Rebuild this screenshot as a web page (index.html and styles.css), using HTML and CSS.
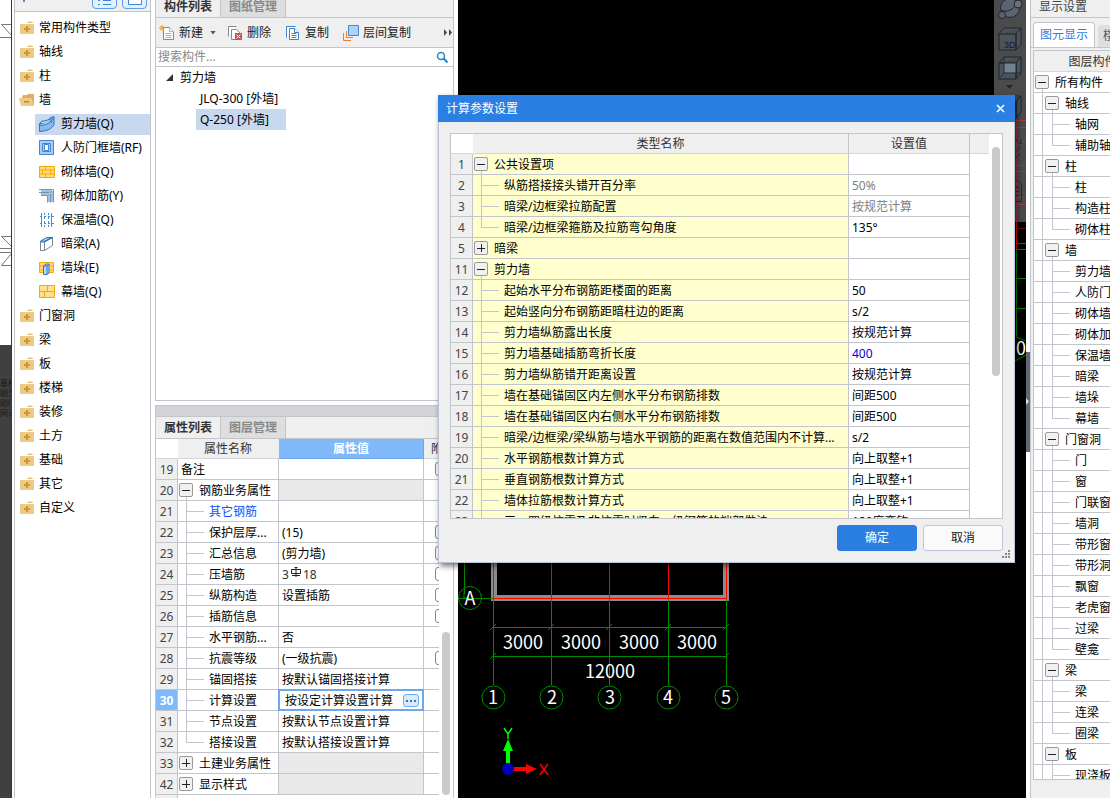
FILE: index.html
```html
<!DOCTYPE html>
<html lang="zh-CN">
<head>
<meta charset="utf-8">
<title>计算参数设置</title>
<link rel="stylesheet" href="styles.css">
</head>
<body>
<svg class="defs" width="0" height="0" aria-hidden="true">
  <symbol id="folder" viewBox="0 0 16 16"><path d="M8 3 9 1.500h4L14.500 3z" fill="#e9c684"/><path d="M1 4h14v10H1z" fill="#efca85"/><path d="M7 6h2v2h2v2H9v2H7v-2H5V8h2z" fill="#c99a3d"/></symbol>
  <symbol id="folder-open" viewBox="0 0 16 16"><path d="M3 5 4 3h4l1-1h6v11h-1l-2-7H3z" fill="#dcb068"/><path d="M0 6h12l3 8H2z" fill="#f0ca84"/><path d="M5 9h5v1.500H5z" fill="#c08a2c"/></symbol>
  <symbol id="cube" viewBox="0 0 24 24"><path d="M1 7h17v16H1zM1 7l5-6h17v16l-5 6V7l5-6" fill="#4b535c" stroke="#1f2730"/></symbol>
</svg>
<div class="app">
  <div class="backdrop" aria-hidden="true">
    <svg class="marks" width="12" height="345" fill="none" stroke="#777"><path d="M11 24.500H1.500l10 11M0 37.500h11M11 236.500H1.500l10 10M0 248.500h11M0 252.500h11M11 254 1.500 265.500H11"/></svg>
    <div class="ghost"><span>基柏</span><span>刚至</span><span>刚(b</span><span>网评</span></div>
  </div>

  <nav class="types">
    <div class="types-bar"><i class="tick"></i>
      <button aria-label="列表"><svg width="14" height="14" stroke="#3f86d8" fill="none"><path d="M0 6.500h2M5 6.500h8M0 10.500h2M5 10.500h8"/></svg></button>
      <button aria-label="视图"><svg width="14" height="14" stroke="#3f86d8" fill="#fff"><path d="M.5 1.500h13v9H.5z"/></svg></button>
    </div>
    <ul>
      <li><svg><use href="#folder"/></svg>常用构件类型</li>
      <li><svg><use href="#folder"/></svg>轴线</li>
      <li><svg><use href="#folder"/></svg>柱</li>
      <li><svg><use href="#folder-open"/></svg>墙</li>
      <li class="sub on"><span><svg fill="#8ab9ee" stroke="#2f74bd"><path d="M.5 7.500C6 8 10 6 12 1.500l3-1v8C13 13 8 15 .5 15.500z"/><path d="M.5 7.500 3 5c4 0 7-1 9-3.500M12 1.500V7M.5 9.500C8 9.500 12 6 15 1.500" fill="#aacdf5"/></svg>剪力墙(Q)</span></li>
      <li class="sub"><span><svg fill="#a9cdf6" stroke="#4584cf"><path d="M.5.500h14v14H.5z"/><path d="M3.500 3.500h8v8h-8z"/><path d="M5.500 4.500h4v6h-4z" fill="#fff"/></svg>人防门框墙(RF)</span></li>
      <li class="sub"><span><svg fill="#ffd978" stroke="#f5a90c"><path d="M.5 2.500h15v11H.5zM0 6h16M0 10h16M6.500 2.500V6M3.500 6v4M11.500 6v4M6.500 10v3.500"/></svg>砌体墙(Q)</span></li>
      <li class="sub"><span><svg fill="none" stroke="#7f93aa"><path d="M0 1.500h14.500v13M0 4.500h11.500v10M2 7.500h6.500v7"/><path d="M2 3h11v11M2 6h8v8" stroke="#3e80d0"/></svg>砌体加筋(Y)</span></li>
      <li class="sub"><span><svg fill="none" stroke="#438adb"><path d="M2.500 1v14M12.500 1v14"/><path d="M5.500 1v14M9.500 1v14M1 4.500h14M1 11.500h14" stroke-dasharray="2 2"/></svg>保温墙(Q)</span></li>
      <li class="sub"><span><svg fill="#fff" stroke="#73869b"><path d="M1.500 5.500h4v9h-4zM5.500 5.500l8-4v8l-8 5z"/><path d="M1.500 5 8 1.500h6L5.500 6h-4zM3 5h3l6-3.500" fill="#a5cdf8" stroke="#2f76c7"/></svg>暗梁(A)</span></li>
      <li class="sub"><span><svg fill="#ffd978" stroke="#f5a90c"><path d="M.5 2.500h14v10H.5zM0 6h15M0 10h15"/><path d="M4.500 6 7 4h3v9l-2 1.500H4.500zM8 6v8M4.500 6H8l2-2" fill="#b7d9ff" stroke="#2f76c7"/></svg>墙垛(E)</span></li>
      <li class="sub"><span><svg fill="#ffe08c" stroke="#f5a90c"><path d="M.5 1.500h15v12H.5zM0 7.500h16M8.500 1.500v6M5.500 7.500v6"/></svg>幕墙(Q)</span></li>
      <li><svg><use href="#folder"/></svg>门窗洞</li>
      <li><svg><use href="#folder"/></svg>梁</li>
      <li><svg><use href="#folder"/></svg>板</li>
      <li><svg><use href="#folder"/></svg>楼梯</li>
      <li><svg><use href="#folder"/></svg>装修</li>
      <li><svg><use href="#folder"/></svg>土方</li>
      <li><svg><use href="#folder"/></svg>基础</li>
      <li><svg><use href="#folder"/></svg>其它</li>
      <li><svg><use href="#folder"/></svg>自定义</li>
    </ul>
  </nav>

  <div class="middle">
    <section class="components">
      <div class="tabs clipped"><button class="on">构件列表</button><button>图纸管理</button></div>
      <div class="tools">
        <button class="new"><svg fill="#fff" stroke="#7b8996"><path d="M4.500 2.500h6l4 4v8h-10z"/><path d="M10.500 2.500v4h4M6.500 8.500h6M6.500 10.500h6M6.500 12.500h6" stroke="#aab2ba"/><path d="M1 1l4 4M5 1 1 5M3 0v6M0 3h6" stroke="#eda526"/></svg>新建<i class="caret"></i></button>
        <button class="del"><svg fill="#fff" stroke="#7b8996"><path d="M1.500 11.500v-10h8M4.500 14.500v-10h5l4 4v6z"/><path d="M8 8h7v7H8z" fill="#d84848" stroke="none"/><path d="m9.500 9.500 4 4m0-4-4 4" stroke="#fff"/></svg>删除</button>
        <button class="copy"><svg fill="#fff" stroke="#3f82c9"><path d="M1.500 12.500v-11h9M4.500 14.500v-11h5l4 4v7z"/><path d="M9.500 3.500v4h4M6.500 8.500h5M6.500 10.500h5M6.500 12.500h5"/></svg>复制</button>
        <button class="layer"><svg fill="none" stroke="#ee7d2c"><path d="M.5 8v7.500H8M3.500 6v6.500H10"/><path d="M5.500.500h10v10h-10z" fill="#acd3ff" stroke="#488ac8"/></svg>层间复制</button>
        <button class="more" aria-label="更多"><svg width="10" height="8"><path d="m1 0 3 3.500L1 7zm5 0 3 3.500L6 7z" fill="#444"/></svg></button>
      </div>
      <label class="search"><input type="text" placeholder="搜索构件..." aria-label="搜索构件"><svg width="12" height="12" fill="none" stroke="#2583c5" stroke-width="1.500"><circle cx="5" cy="5" r="3.500"/><path d="m7.500 7.500 4 4" stroke-width="2"/></svg></label>
      <ul class="list">
        <li><svg width="7" height="7"><path d="M7 0v7H0z" fill="#333"/></svg>剪力墙</li>
        <li class="leaf"><span>JLQ-300 [外墙]</span></li>
        <li class="leaf on"><span>Q-250 [外墙]</span></li>
      </ul>
    </section>
    <section class="props">
      <div class="strip"></div>
      <div class="tabs"><button class="on">属性列表</button><button>图层管理</button></div>
      <div class="props-body">
        <div class="props-view">
          <table class="grid">
            <colgroup><col class="c-num"><col class="c-prop"><col class="c-pval"><col class="c-extra"></colgroup>
            <thead><tr><th></th><th>属性名称</th><th class="hot">属性值</th><th class="extra">附加</th></tr></thead>
            <tbody>
              <tr><th>19</th><td>备注</td><td></td><td class="ck"><input type="checkbox" aria-label="备注"></td></tr>
              <tr><th>20</th><td><div class="n"><button class="box open" aria-label="折叠"></button>钢筋业务属性</div></td><td class="off"></td><td></td></tr>
              <tr><th>21</th><td><div class="n"><i class="branch"></i><a href="#">其它钢筋</a></div></td><td></td><td></td></tr>
              <tr><th>22</th><td><div class="n"><i class="branch"></i>保护层厚...</div></td><td>(15)</td><td class="ck"><input type="checkbox" aria-label="保护层厚度"></td></tr>
              <tr><th>23</th><td><div class="n"><i class="branch"></i>汇总信息</div></td><td>(剪力墙)</td><td class="ck"><input type="checkbox" aria-label="汇总信息"></td></tr>
              <tr><th>24</th><td><div class="n"><i class="branch"></i>压墙筋</div></td><td><div class="bar">3<svg width="10" height="14" fill="none" stroke="#222"><path d="M5 1v10M1 9.500h8M.5 3.500h9v4H.5zM3.500 1.500h3"/></svg>18</div></td><td class="ck"><input type="checkbox" aria-label="压墙筋"></td></tr>
              <tr><th>25</th><td><div class="n"><i class="branch"></i>纵筋构造</div></td><td>设置插筋</td><td class="ck"><input type="checkbox" aria-label="纵筋构造"></td></tr>
              <tr><th>26</th><td><div class="n"><i class="branch"></i>插筋信息</div></td><td></td><td class="ck"><input type="checkbox" aria-label="插筋信息"></td></tr>
              <tr><th>27</th><td><div class="n"><i class="branch"></i>水平钢筋...</div></td><td>否</td><td></td></tr>
              <tr><th>28</th><td><div class="n"><i class="branch"></i>抗震等级</div></td><td>(一级抗震)</td><td class="ck"><input type="checkbox" aria-label="抗震等级"></td></tr>
              <tr><th>29</th><td><div class="n"><i class="branch"></i>锚固搭接</div></td><td>按默认锚固搭接计算</td><td></td></tr>
              <tr><th class="cur">30</th><td><div class="n"><i class="branch"></i>计算设置</div></td><td class="edit"><div><input type="text" value="按设定计算设置计算" aria-label="计算设置"><button aria-label="选择"><i></i><i></i><i></i></button></div></td><td></td></tr>
              <tr><th>31</th><td><div class="n"><i class="branch"></i>节点设置</div></td><td>按默认节点设置计算</td><td></td></tr>
              <tr><th>32</th><td><div class="n"><i class="branch last"></i>搭接设置</div></td><td>按默认搭接设置计算</td><td></td></tr>
              <tr><th>33</th><td><div class="n"><button class="box plus" aria-label="展开"></button>土建业务属性</div></td><td class="off"></td><td></td></tr>
              <tr><th>42</th><td><div class="n"><button class="box plus" aria-label="展开"></button>显示样式</div></td><td class="off"></td><td></td></tr>
              <tr class="tail"><th></th><td colspan="3"></td></tr>
            </tbody>
          </table>
        </div>
        <div class="scroll"><i></i></div>
      </div>
    </section>
  </div>

  <main class="canvas">
    <svg class="plan" fill="none" stroke="#008a00">
      <path d="M36 540v58h232v-58" stroke="#8c8c8c" stroke-width="6"/>
      <path d="M35.500 540v58.500h233V540M93.500 540v58M151.500 540v58M210.500 540v58" stroke="#f00"/>
      <path d="M6.500 540v54M0 598.500h35M35.500 599v86M93.500 599v86M151.500 599v86M210.500 599v86M268.500 599v86M35 627.500h234M35 656.500h234"/>
      <path d="m32 630 6-6m52 6 6-6m52 6 6-6m53 6 6-6m52 6 6-6M32 659l6-6m227 6 6-6M6 590v8h6"/>
      <circle cx="12" cy="598" r="11.500"/><circle cx="35.500" cy="697.500" r="11.500"/><circle cx="93.500" cy="697.500" r="11.500"/><circle cx="151.500" cy="697.500" r="11.500"/><circle cx="210.500" cy="697.500" r="11.500"/><circle cx="268.500" cy="697.500" r="11.500"/>
      <g class="dims"><text x="12" y="605">A</text><text x="65" y="649">3000</text><text x="123" y="649">3000</text><text x="181" y="649">3000</text><text x="239" y="649">3000</text><text x="152" y="678">12000</text><text x="35" y="704">1</text><text x="94" y="704">2</text><text x="152" y="704">3</text><text x="210" y="704">4</text><text x="268" y="704">5</text></g>
      <g stroke="none"><path d="M48 769v-18h-3l5-12 5 12h-3v18z" fill="#0f0"/><path d="M50 767h18v-3l11 5-11 5v-3H50z" fill="#f00"/><circle cx="50" cy="769" r="6" fill="#0000b8"/></g>
      <path d="m46 728 4 6 4-6m-4 6v5" stroke="#0f0" stroke-width="1.500"/><path d="m82 764 8 11m0-11-8 11" stroke="#f00" stroke-width="1.500"/>
    </svg>
    <svg class="edge" width="32" height="400" fill="none">
      <path d="M0 0h32v222H0z" fill="#4b4b4b"/>
      <g stroke="#1f2730"><circle cx="16" cy="8" r="9.500" fill="#5b6570"/><path d="M7 10c6 3 13 0 15-7"/><circle cx="24" cy="4" r="4" fill="#66717c"/><circle cx="8" cy="15" r="3.500" fill="#59636d"/></g>
      <svg x="4" y="27" width="24" height="24"><use href="#cube"/></svg><text x="10" y="48" class="three">3D</text>
      <svg x="4" y="56" width="24" height="24"><use href="#cube"/><path d="M6 7h12v10H6z" fill="#73818e"/><path d="M6 1v16h17M1 23l5-6M1 7h17v16" stroke="#202a33"/></svg>
      <path d="M12 85h7l-3.500 4z" fill="#24282c"/>
      <svg x="4" y="95" width="24" height="24"><use href="#cube"/></svg>
      <path d="M22 120.500h10M22 127.500h10M22 141.500h10M22 165.500h10M22 171.500h10M22 197.500h10M22 204.500h10M22.500 120v102" stroke="#a63a3a"/>
      <path d="M21 139l6 5v-5M21 152l6-5M21 158l5-4M21 180.500h3l3.500 3.500v17.500H21M21 187.500h4M21 191.500h4M21 195.500h4" stroke="#242e36"/>
      <path d="M22.500 222v27M22 243.500h10M22 249.500h10" stroke="#f00"/><path d="M22 228.500h10" stroke="#700"/>
      <path d="M22.500 249v88l9 4M22 278.500h10M22 308.500h10M21 361l11-6" stroke="#008a00"/>
      <text x="22" y="355" class="zero">0</text>
    </svg>
  </main>
  <div class="handle"><button aria-label="收起"><svg width="4" height="8"><path d="m0 0 3 3.500L0 7z" fill="#ddd"/></svg></button></div>

  <aside class="display">
    <div class="display-title">显示设置</div>
    <div class="sheet-tabs"><button class="on">图元显示</button><button>楼层显示</button></div>
    <div class="display-view">
      <table class="grid">
        <thead><tr><th>图层构件</th></tr></thead>
        <tbody>
          <tr><td><div class="n"><button class="box open" aria-label="折叠"></button>所有构件</div></td></tr>
          <tr><td><div class="n"><i class="guide"></i><button class="box open" aria-label="折叠"></button>轴线</div></td></tr>
          <tr><td><div class="n"><i class="guide"></i><i class="branch"></i>轴网</div></td></tr>
          <tr><td><div class="n"><i class="guide"></i><i class="branch last"></i>辅助轴线</div></td></tr>
          <tr><td><div class="n"><i class="guide"></i><button class="box open" aria-label="折叠"></button>柱</div></td></tr>
          <tr><td><div class="n"><i class="guide"></i><i class="branch"></i>柱</div></td></tr>
          <tr><td><div class="n"><i class="guide"></i><i class="branch"></i>构造柱</div></td></tr>
          <tr><td><div class="n"><i class="guide"></i><i class="branch last"></i>砌体柱</div></td></tr>
          <tr><td><div class="n"><i class="guide"></i><button class="box open" aria-label="折叠"></button>墙</div></td></tr>
          <tr><td><div class="n"><i class="guide"></i><i class="branch"></i>剪力墙</div></td></tr>
          <tr><td><div class="n"><i class="guide"></i><i class="branch"></i>人防门框墙</div></td></tr>
          <tr><td><div class="n"><i class="guide"></i><i class="branch"></i>砌体墙</div></td></tr>
          <tr><td><div class="n"><i class="guide"></i><i class="branch"></i>砌体加筋</div></td></tr>
          <tr><td><div class="n"><i class="guide"></i><i class="branch"></i>保温墙</div></td></tr>
          <tr><td><div class="n"><i class="guide"></i><i class="branch"></i>暗梁</div></td></tr>
          <tr><td><div class="n"><i class="guide"></i><i class="branch"></i>墙垛</div></td></tr>
          <tr><td><div class="n"><i class="guide"></i><i class="branch last"></i>幕墙</div></td></tr>
          <tr><td><div class="n"><i class="guide"></i><button class="box open" aria-label="折叠"></button>门窗洞</div></td></tr>
          <tr><td><div class="n"><i class="guide"></i><i class="branch"></i>门</div></td></tr>
          <tr><td><div class="n"><i class="guide"></i><i class="branch"></i>窗</div></td></tr>
          <tr><td><div class="n"><i class="guide"></i><i class="branch"></i>门联窗</div></td></tr>
          <tr><td><div class="n"><i class="guide"></i><i class="branch"></i>墙洞</div></td></tr>
          <tr><td><div class="n"><i class="guide"></i><i class="branch"></i>带形窗</div></td></tr>
          <tr><td><div class="n"><i class="guide"></i><i class="branch"></i>带形洞</div></td></tr>
          <tr><td><div class="n"><i class="guide"></i><i class="branch"></i>飘窗</div></td></tr>
          <tr><td><div class="n"><i class="guide"></i><i class="branch"></i>老虎窗</div></td></tr>
          <tr><td><div class="n"><i class="guide"></i><i class="branch"></i>过梁</div></td></tr>
          <tr><td><div class="n"><i class="guide"></i><i class="branch last"></i>壁龛</div></td></tr>
          <tr><td><div class="n"><i class="guide"></i><button class="box open" aria-label="折叠"></button>梁</div></td></tr>
          <tr><td><div class="n"><i class="guide"></i><i class="branch"></i>梁</div></td></tr>
          <tr><td><div class="n"><i class="guide"></i><i class="branch"></i>连梁</div></td></tr>
          <tr><td><div class="n"><i class="guide"></i><i class="branch last"></i>圈梁</div></td></tr>
          <tr><td><div class="n"><i class="guide"></i><button class="box open" aria-label="折叠"></button>板</div></td></tr>
          <tr><td><div class="n"><i class="guide"></i><i class="branch"></i>现浇板</div></td></tr>
        </tbody>
      </table>
    </div>
  </aside>

  <section class="dialog" role="dialog" aria-label="计算参数设置">
    <header><h1>计算参数设置</h1><button aria-label="关闭"><svg width="9" height="9" stroke="#fff" stroke-width="1.500"><path d="m1 1 7 7m0-7-7 7"/></svg></button></header>
    <div class="params">
      <table class="grid">
        <colgroup><col class="c-num"><col><col class="c-val"><col class="c-rest"></colgroup>
        <thead><tr><th></th><th class="line">类型名称</th><th class="line">设置值</th><th></th></tr></thead>
        <tbody>
          <tr><th>1</th><td><div class="n"><button class="box open" aria-label="折叠"></button>公共设置项</div></td><td></td></tr>
          <tr><th>2</th><td><div class="n"><i class="branch"></i>纵筋搭接接头错开百分率</div></td><td class="dim">50%</td></tr>
          <tr><th>3</th><td><div class="n"><i class="branch"></i>暗梁/边框梁拉筋配置</div></td><td class="dim">按规范计算</td></tr>
          <tr><th>4</th><td><div class="n"><i class="branch last"></i>暗梁/边框梁箍筋及拉筋弯勾角度</div></td><td>135°</td></tr>
          <tr><th>5</th><td><div class="n"><button class="box plus" aria-label="展开"></button>暗梁</div></td><td></td></tr>
          <tr><th>11</th><td><div class="n"><button class="box open" aria-label="折叠"></button>剪力墙</div></td><td></td></tr>
          <tr><th>12</th><td><div class="n"><i class="branch"></i>起始水平分布钢筋距楼面的距离</div></td><td>50</td></tr>
          <tr><th>13</th><td><div class="n"><i class="branch"></i>起始竖向分布钢筋距暗柱边的距离</div></td><td>s/2</td></tr>
          <tr><th>14</th><td><div class="n"><i class="branch"></i>剪力墙纵筋露出长度</div></td><td>按规范计算</td></tr>
          <tr><th>15</th><td><div class="n"><i class="branch"></i>剪力墙基础插筋弯折长度</div></td><td class="changed">400</td></tr>
          <tr><th>16</th><td><div class="n"><i class="branch"></i>剪力墙纵筋错开距离设置</div></td><td>按规范计算</td></tr>
          <tr><th>17</th><td><div class="n"><i class="branch"></i>墙在基础锚固区内左侧水平分布钢筋排数</div></td><td>间距500</td></tr>
          <tr><th>18</th><td><div class="n"><i class="branch"></i>墙在基础锚固区内右侧水平分布钢筋排数</div></td><td>间距500</td></tr>
          <tr><th>19</th><td><div class="n"><i class="branch"></i>暗梁/边框梁/梁纵筋与墙水平钢筋的距离在数值范围内不计算...</div></td><td>s/2</td></tr>
          <tr><th>20</th><td><div class="n"><i class="branch"></i>水平钢筋根数计算方式</div></td><td>向上取整+1</td></tr>
          <tr><th>21</th><td><div class="n"><i class="branch"></i>垂直钢筋根数计算方式</div></td><td>向上取整+1</td></tr>
          <tr><th>22</th><td><div class="n"><i class="branch"></i>墙体拉筋根数计算方式</div></td><td>向上取整+1</td></tr>
          <tr><th>23</th><td><div class="n"><i class="branch"></i>三、四级抗震及非抗震时竖向一级钢筋的端部做法</div></td><td>180度弯钩</td></tr>
        </tbody>
      </table>
      <div class="scroll"><i></i></div>
    </div>
    <footer><button class="ok">确定</button><button>取消</button></footer>
    <svg class="grip" width="9" height="9" fill="#888"><path d="M6 0h2v2H6zM3 3h2v2H3zM6 3h2v2H6zM0 6h2v2H0zM3 6h2v2H3zM6 6h2v2H6z"/></svg>
  </section>
</div>
</body>
</html>
```
FILE: styles.css
```css
:root {
  --line: #c3c5cc;
  --face: #efefef;
  --pick: #c8d9ef;
  --blue: #2c7fe2;
}
* { box-sizing: border-box; }
body {
  margin: 0;
  font: 12px/20px "Noto Sans", "Noto Sans CJK SC", sans-serif;
  color: #000;
  background: #fff;
}
ul { list-style: none; margin: 0; padding: 0; }
button, input { font: inherit; color: inherit; padding: 0; margin: 0; border: 0; background: none; }
svg { flex: none; display: block; }
.defs { position: absolute; }
.app { position: relative; display: flex; height: 100vh; overflow: hidden; }

/* window edge behind the application */
.backdrop {
  flex: none;
  width: 12px;
  border-right: 1px solid #1d3d6e;
  background: linear-gradient(#fff 345px, #404040 345px);
  overflow: hidden;
}
.ghost { display: grid; padding-top: 33px; font-size: 8px; line-height: 10px; color: #171717; white-space: nowrap; }

/* component types */
.types { flex: none; width: 137px; margin-left: 2px; border: solid var(--line); border-width: 0 1px; }
.types-bar {
  display: flex;
  align-items: flex-end;
  gap: 5px;
  height: 12px;
  padding: 0 3px 2px 8px;
  border-bottom: 1px solid var(--line);
  background: var(--face);
  overflow: hidden;
}
.types-bar button { display: grid; place-items: center; flex: none; width: 25px; height: 25px; border: 1px solid #5a9fe8; border-radius: 4px; background: #e3f0fd; }
.types-bar svg { margin-top: 8px; }
.tick { width: 2px; height: 9px; margin-right: auto; background: linear-gradient(#4b89cc 2px, transparent 2px); }
.types ul { padding-top: 4px; }
.types li { display: flex; align-items: center; gap: 4px; height: 24px; padding-left: 4px; white-space: nowrap; }
.types li svg { width: 16px; height: 16px; }
.types .sub { padding-left: 20px; }
.sub span { display: flex; align-items: center; flex: 1; gap: 6px; height: 21px; padding-left: 4px; }
.on > span { background: var(--pick); }

/* component list and properties */
.middle { flex: none; display: flex; flex-direction: column; width: 299px; margin: 0 4px; }
.components { display: flex; flex-direction: column; flex: none; height: 401px; border: 1px solid var(--line); border-top: 0; }
.tabs { flex: none; display: flex; align-items: flex-end; height: 22px; border-bottom: 1px solid var(--line); background: var(--face); overflow: hidden; }
.tabs.clipped { height: 18px; }
.tabs button { flex: none; width: 65px; height: 21px; border-right: 1px solid var(--line); background: #dedede; color: #888; font-weight: bold; }
.tabs .on { background: var(--face); color: #333; }
.tools { flex: none; display: flex; align-items: center; height: 30px; padding-left: 3px; border-bottom: 1px solid var(--line); background: var(--face); color: #222; }
.tools button { display: flex; align-items: center; gap: 4px; flex: none; }
.tools svg { width: 16px; height: 16px; }
.tools .new { margin-right: 11px; }
.tools .del, .tools .copy { margin-right: 14px; }
.tools .more { margin-left: auto; }
.tools .more svg { width: 10px; height: 8px; }
.caret { width: 6px; height: 4px; margin-left: 3px; background: #555; clip-path: polygon(0 0, 100% 0, 50% 100%); }
.search { flex: none; display: flex; align-items: center; height: 19px; padding: 0 5px 0 2px; border-bottom: 1px solid var(--line); }
.search input { flex: 1; min-width: 0; outline: 0; }
.search input::placeholder { color: #888; opacity: 1; }
.list li { display: flex; align-items: center; gap: 7px; height: 21px; padding-left: 10px; }
.list .leaf { padding-left: 40px; }
.leaf span { padding: 0 4px; line-height: 21px; }
.leaf.on span { padding-right: 17px; }

.props { display: flex; flex-direction: column; flex: 1; min-height: 0; margin-top: 4px; border: solid var(--line); border-width: 0 1px; overflow: hidden; }
.strip { flex: none; height: 12px; border: solid var(--line); border-width: 1px 0; background: #d3d4d9; }
.props-body { display: flex; flex: 1; min-height: 0; }
.props-view { width: 283px; overflow: hidden; }
.props-view .grid { width: 300px; }
.scroll { flex: none; }
.scroll i { display: block; width: 8px; border-radius: 4px; background: #cacaca; }
.props .scroll { padding: 193px 3px 0; }
.props .scroll i { height: 163px; }

/* grids */
.grid { table-layout: fixed; width: 100%; border-spacing: 0; }
.grid th, .grid td { height: 21px; padding: 2px 0 0; border: solid var(--line); border-width: 0 1px 1px 0; font-weight: normal; line-height: 18px; white-space: nowrap; text-align: left; }
.grid td { padding-left: 3px; }
.grid td:has(.n) { padding-left: 0; }
.grid .edit, .grid .ck { padding: 0; }
.grid thead th { height: 20px; padding: 0; border-right-color: transparent; border-bottom-color: #d5d6da; background: var(--face); color: #333; text-align: center; line-height: 19px; }
.grid thead th:first-child:empty { background: #fff; }
.grid thead .line { border-right-color: var(--line); }
.grid tbody th { background: var(--face); color: #444; text-align: center; }
.c-num { width: 22px; }
.c-prop { width: 101px; }
.c-pval { width: 145px; }
.grid thead .hot { background: #80b9fa; border-color: #6ca7e8; color: #fff; font-weight: bold; }
.grid thead .extra { padding-left: 7px; text-align: left; }
.grid .off { background: #e9e9e9; }
.grid .cur { background: #80b9fa; color: #fff; font-weight: bold; }
.tail td, .grid .tail th { height: 4px; }
.grid a { color: #0a50ff; text-decoration: none; }
.ck input { appearance: none; display: block; width: 14px; height: 14px; margin-left: 11px; border: 1px solid #888; border-radius: 3px; }
.bar { display: flex; align-items: center; gap: 2px; height: 18px; color: #333; }
.bar svg { align-self: flex-start; }
.edit div { display: flex; align-items: center; height: 20px; padding: 1px 3px 0 5px; outline: 1px solid #6ba8ee; border: 1px solid #6ba8ee; }
.edit input { flex: 1; min-width: 0; height: 18px; line-height: 18px; outline: 0; }
.edit button { display: flex; align-items: center; justify-content: center; gap: 2px; width: 16px; height: 13px; border: 1px solid #70acec; border-radius: 3px; background: #d7e9fb; }
.edit i { width: 2px; height: 2px; background: #3c75a9; }

/* tree cells */
.n { display: flex; align-items: center; height: 18px; }
.box { position: relative; flex: none; width: 14px; height: 14px; margin: 0 6px 2px 1px; border: 1px solid #999; border-radius: 2px; background: linear-gradient(#222, #222) center / 8px 1px no-repeat #f1f1f1; }
.box.plus { background: linear-gradient(#222, #222) center / 8px 1px no-repeat, linear-gradient(#222, #222) center / 1px 8px no-repeat #f1f1f1; }
.box.open::after { content: ""; position: absolute; left: 6px; top: 13px; height: 4px; border-left: 1px solid var(--line); }
.branch, .guide { position: relative; flex: none; align-self: stretch; width: 26px; margin-right: 5px; }
.branch::before, .guide::before { content: ""; position: absolute; left: 8px; top: -2px; bottom: -1px; border-left: 1px solid var(--line); }
.branch.last::before { bottom: 9px; }
.branch::after { content: ""; position: absolute; left: 9px; right: 0; top: 8px; border-top: 1px solid var(--line); }
.guide { width: 10px; margin: 0; }

/* drawing area */
.canvas { position: relative; flex: 1; min-width: 0; background: #000; overflow: hidden; }
.plan { position: absolute; inset: 0; width: 100%; height: 100%; }
.dims text { fill: #fff; stroke: none; font: 18px "Noto Sans CJK SC", sans-serif; text-anchor: middle; }
.edge { position: absolute; top: 0; right: 0; }
.three { fill: #151b21; font: 9px "Liberation Sans", sans-serif; }
.zero { fill: #fff; font: 18px "Noto Sans CJK SC", sans-serif; }
.handle { flex: none; width: 4px; padding-top: 352px; }
.handle button { display: grid; align-items: center; width: 4px; height: 100px; background: #606873; }

/* display settings */
.display { flex: none; display: flex; flex-direction: column; width: 80px; padding-bottom: 18px; border-left: 1px solid var(--line); background: var(--face); overflow: hidden; }
.display-title { flex: none; display: flex; align-items: flex-end; height: 18px; padding-left: 8px; border-bottom: 1px solid var(--line); color: #444; }
.sheet-tabs { flex: none; display: flex; align-items: flex-end; gap: 3px; height: 30px; padding-left: 2px; border-bottom: 1px solid var(--line); white-space: nowrap; }
.sheet-tabs button { flex: none; height: 22px; padding: 0 5px; border-radius: 4px 4px 0 0; background: #dedede; color: #555; }
.sheet-tabs .on { width: 62px; height: 25px; border: 1px solid var(--line); border-bottom: 0; background: #fff; color: var(--blue); }
.display-view { flex: 1; min-height: 0; margin: 2px 0 0 2px; border: solid var(--line); border-width: 1px 0 1px 1px; background: #fff; overflow: hidden; }
.display-view .grid { width: 118px; }
.display-view .grid thead th { height: 21px; }

/* parameter dialog */
.dialog { position: absolute; left: 438px; top: 95px; width: 577px; border: 1px solid #b9c3d6; border-top: 0; background: var(--face); box-shadow: 2px 3px 6px rgb(0 0 0 / 55%); }
.dialog header { display: flex; align-items: center; justify-content: space-between; height: 27px; margin: 0 -1px; padding: 0 10px 0 8px; background: var(--blue); color: #fff; }
.dialog h1 { margin: 0; font-size: 12px; font-weight: normal; }
.params { display: flex; height: 386px; margin: 11px 11px 0; border: 1px solid var(--line); background: #fff; overflow: hidden; }
.params .grid { flex: 1; min-width: 0; height: max-content; }
.c-val { width: 121px; }
.c-rest { width: 19px; }
.params td:nth-child(2) { background: #ffffcd; }
.params .dim { color: #808080; }
.params .changed { color: #0000e0; }
.params .scroll { padding: 13px 2px 0 3px; }
.params .scroll i { height: 229px; }
.dialog footer { display: flex; justify-content: flex-end; gap: 6px; padding: 6px 11px 11px; }
.dialog footer button { width: 80px; height: 26px; border: 1px solid #bdc8d8; border-radius: 3px; background: #fafafa; color: #222; }
.dialog footer .ok { border-color: var(--blue); background: var(--blue); color: #fff; }
.grip { position: absolute; right: 3px; bottom: 3px; }
```
